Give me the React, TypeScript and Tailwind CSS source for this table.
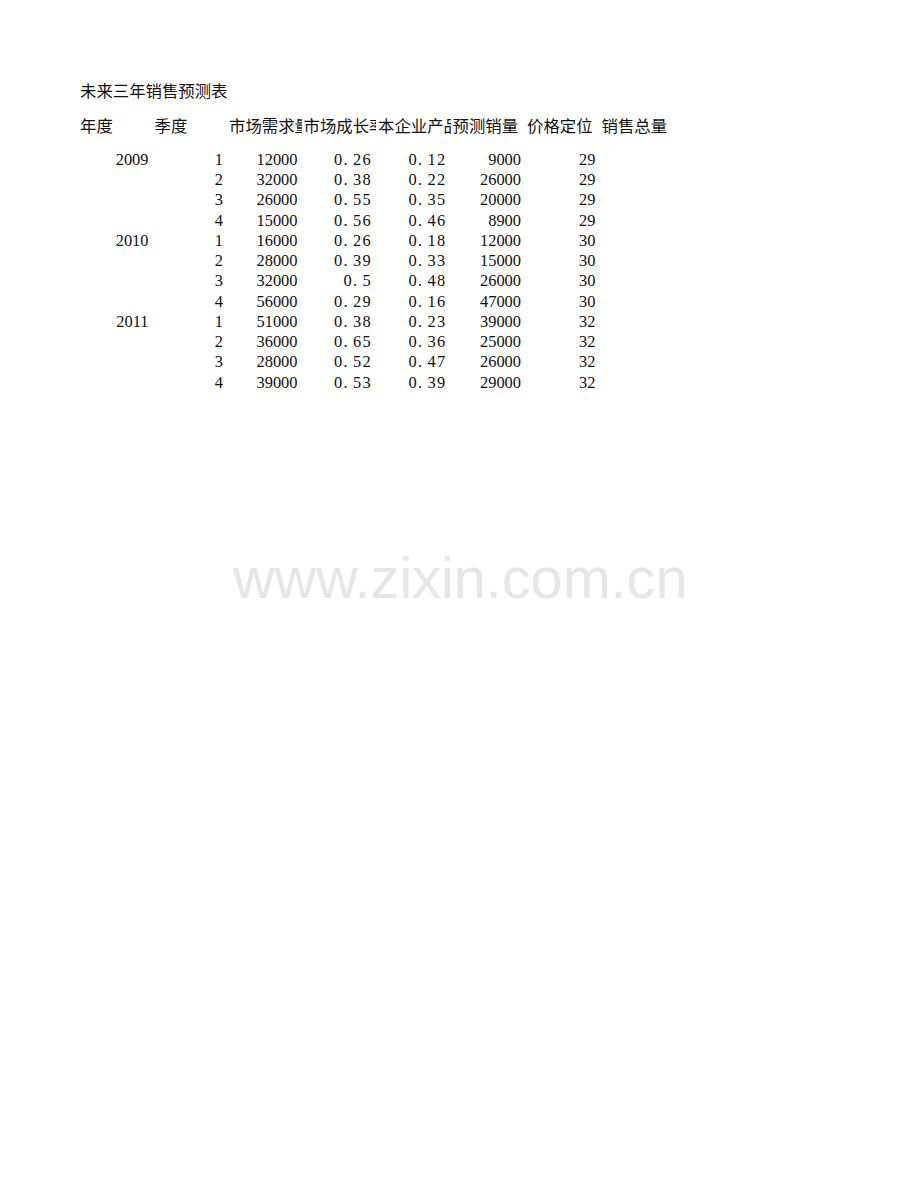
import React from "react";

type Row = {
  year?: string;
  quarter: number;
  demand: number;
  growth: string;
  share: string;
  forecast: number;
  price: number;
};

const rows: Row[] = [
  { year: "2009", quarter: 1, demand: 12000, growth: "0.26", share: "0.12", forecast: 9000, price: 29 },
  { quarter: 2, demand: 32000, growth: "0.38", share: "0.22", forecast: 26000, price: 29 },
  { quarter: 3, demand: 26000, growth: "0.55", share: "0.35", forecast: 20000, price: 29 },
  { quarter: 4, demand: 15000, growth: "0.56", share: "0.46", forecast: 8900, price: 29 },
  { year: "2010", quarter: 1, demand: 16000, growth: "0.26", share: "0.18", forecast: 12000, price: 30 },
  { quarter: 2, demand: 28000, growth: "0.39", share: "0.33", forecast: 15000, price: 30 },
  { quarter: 3, demand: 32000, growth: "0.5", share: "0.48", forecast: 26000, price: 30 },
  { quarter: 4, demand: 56000, growth: "0.29", share: "0.16", forecast: 47000, price: 30 },
  { year: "2011", quarter: 1, demand: 51000, growth: "0.38", share: "0.23", forecast: 39000, price: 32 },
  { quarter: 2, demand: 36000, growth: "0.65", share: "0.36", forecast: 25000, price: 32 },
  { quarter: 3, demand: 28000, growth: "0.52", share: "0.47", forecast: 26000, price: 32 },
  { quarter: 4, demand: 39000, growth: "0.53", share: "0.39", forecast: 29000, price: 32 },
];

const headers = ["年度", "季度", "市场需求量", "市场成长率", "本企业产品", "预测销量", "价格定位", "销售总量"];

// decimals in the sheet come out in a fixed-width font, one cell per char
function Decimal({ value }: { value: string }) {
  return (
    <span className="inline-flex">
      {value.split("").map((ch, i) => (
        <span key={i} className="inline-block w-[9.5px] text-left">
          {ch}
        </span>
      ))}
    </span>
  );
}

function Cell({ children }: { children?: React.ReactNode }) {
  return <div className="h-[20.27px] flex items-center justify-end pr-[4px] overflow-hidden whitespace-nowrap">{children}</div>;
}

export default function App() {
  return (
    <div className="relative min-h-[1191px] w-full bg-white text-[#111] font-['Liberation_Serif','Noto_Sans_CJK_SC',serif] text-[16.4px]">
      <div className="pt-[82px] pl-[78px]">
        <div className="h-[20px] leading-[20px] pl-[2px] whitespace-nowrap">未来三年销售预测表</div>

        <div className="mt-[15px] grid grid-cols-[repeat(8,74.5px)]">
          {headers.map((h) => (
            <div key={h} className="h-[20px] leading-[20px] pl-[2px] overflow-hidden whitespace-nowrap">
              {h}
            </div>
          ))}
        </div>

        <div className="mt-[13px] grid grid-cols-[repeat(8,74.5px)]">
          {rows.map((r, i) => (
            <React.Fragment key={i}>
              <Cell>{r.year}</Cell>
              <Cell>{r.quarter}</Cell>
              <Cell>{r.demand}</Cell>
              <Cell>
                <Decimal value={r.growth} />
              </Cell>
              <Cell>
                <Decimal value={r.share} />
              </Cell>
              <Cell>{r.forecast}</Cell>
              <Cell>{r.price}</Cell>
              <Cell />
            </React.Fragment>
          ))}
        </div>
      </div>

      <div className="absolute left-[233px] top-[538px] font-['Liberation_Sans',sans-serif] text-[57.6px] leading-[80px] text-[#e6e6e6] whitespace-nowrap select-none">
        www.zixin.com.cn
      </div>
    </div>
  );
}
